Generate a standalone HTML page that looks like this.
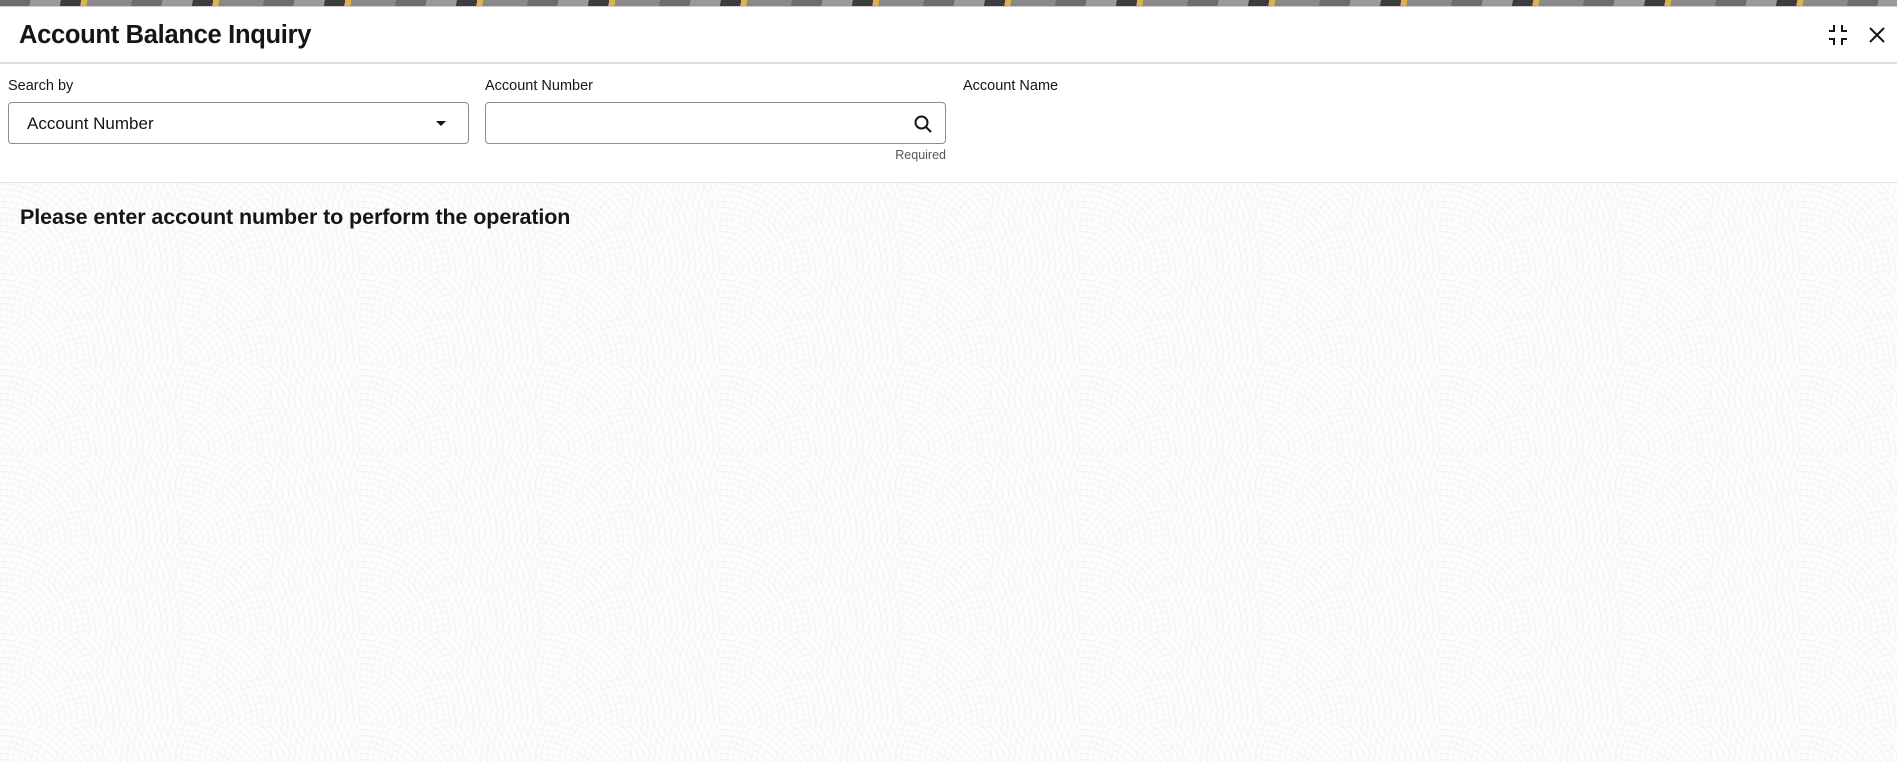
<!DOCTYPE html>
<html><head><style>
*{margin:0;padding:0;box-sizing:border-box}
body{width:1897px;height:762px;overflow:hidden;font-family:"Liberation Sans",sans-serif;color:#161513;background:#fff;position:relative}
.strip{position:absolute;left:0;top:0;width:1897px;height:6px;background:repeating-linear-gradient(100deg,#6d6d6d 0 30px,#9a9a9a 30px 60px,#3c3c3c 60px 80px,#d8b44a 80px 86px,#8a8a8a 86px 130px)}
.strip2{position:absolute;left:0;top:6px;width:1897px;height:1px;background:#ccc}
.title{position:absolute;left:19px;top:21px;font-size:25.5px;font-weight:bold;letter-spacing:-0.3px}
.hline{position:absolute;left:0;top:62px;width:1897px;height:2px;background:#e0e0e0}
.lbl{position:absolute;top:78px;font-size:14.5px}
.box{position:absolute;top:102px;height:42px;border:1px solid #8c8c8c;border-radius:4px;background:#fff}
.sel{left:8px;width:461px}
.sel span{position:absolute;left:18px;top:11px;font-size:17px}
.inp{left:485px;width:461px}
.req{position:absolute;top:148px;right:951px;font-size:12.5px;color:#555}
.sec{position:absolute;left:0;top:182px;width:1897px;height:580px;border-top:1px solid #e4e4e4;
background-color:#fdfdfd;
background-image:repeating-radial-gradient(circle at 0 100%,transparent 0 5px,#f3f3f3 5px 6px),repeating-radial-gradient(circle at 100% 100%,transparent 0 5px,#f5f5f5 5px 6px);
background-size:180px 90px,180px 90px;background-position:0 0,90px 45px}
.msg{position:absolute;left:20px;top:205px;font-size:21.5px;font-weight:bold;letter-spacing:-0.1px}
</style></head><body>
<div class="strip"></div><div class="strip2"></div>
<div class="title">Account Balance Inquiry</div>
<svg style="position:absolute;left:1826px;top:23px" width="24" height="24" viewBox="0 0 24 24" fill="none" stroke="#161513" stroke-width="2"><path d="M8 2v6H3M16 2v6h5M8 22v-6H3M16 22v-6h5"/></svg>
<svg style="position:absolute;left:1868px;top:26px" width="18" height="18" viewBox="0 0 18 18" stroke="#161513" stroke-width="2"><path d="M2 2l14 14M16 2L2 16"/></svg>
<div class="hline"></div>
<div class="lbl" style="left:8px">Search by</div>
<div class="lbl" style="left:485px">Account Number</div>
<div class="lbl" style="left:963px">Account Name</div>
<div class="box sel"><span>Account Number</span>
<svg style="position:absolute;left:426px;top:17px" width="12" height="7"><path d="M1 1h10L6 6z" fill="#161513"/></svg></div>
<div class="box inp"><svg style="position:absolute;left:427px;top:11px" width="20" height="20" viewBox="0 0 20 20" fill="none" stroke="#161513" stroke-width="2"><circle cx="8.5" cy="8.5" r="6"/><path d="M13 13l5 5"/></svg></div>
<div class="req">Required</div>
<div class="sec"></div>
<div class="msg">Please enter account number to perform the operation</div>
</body></html>
